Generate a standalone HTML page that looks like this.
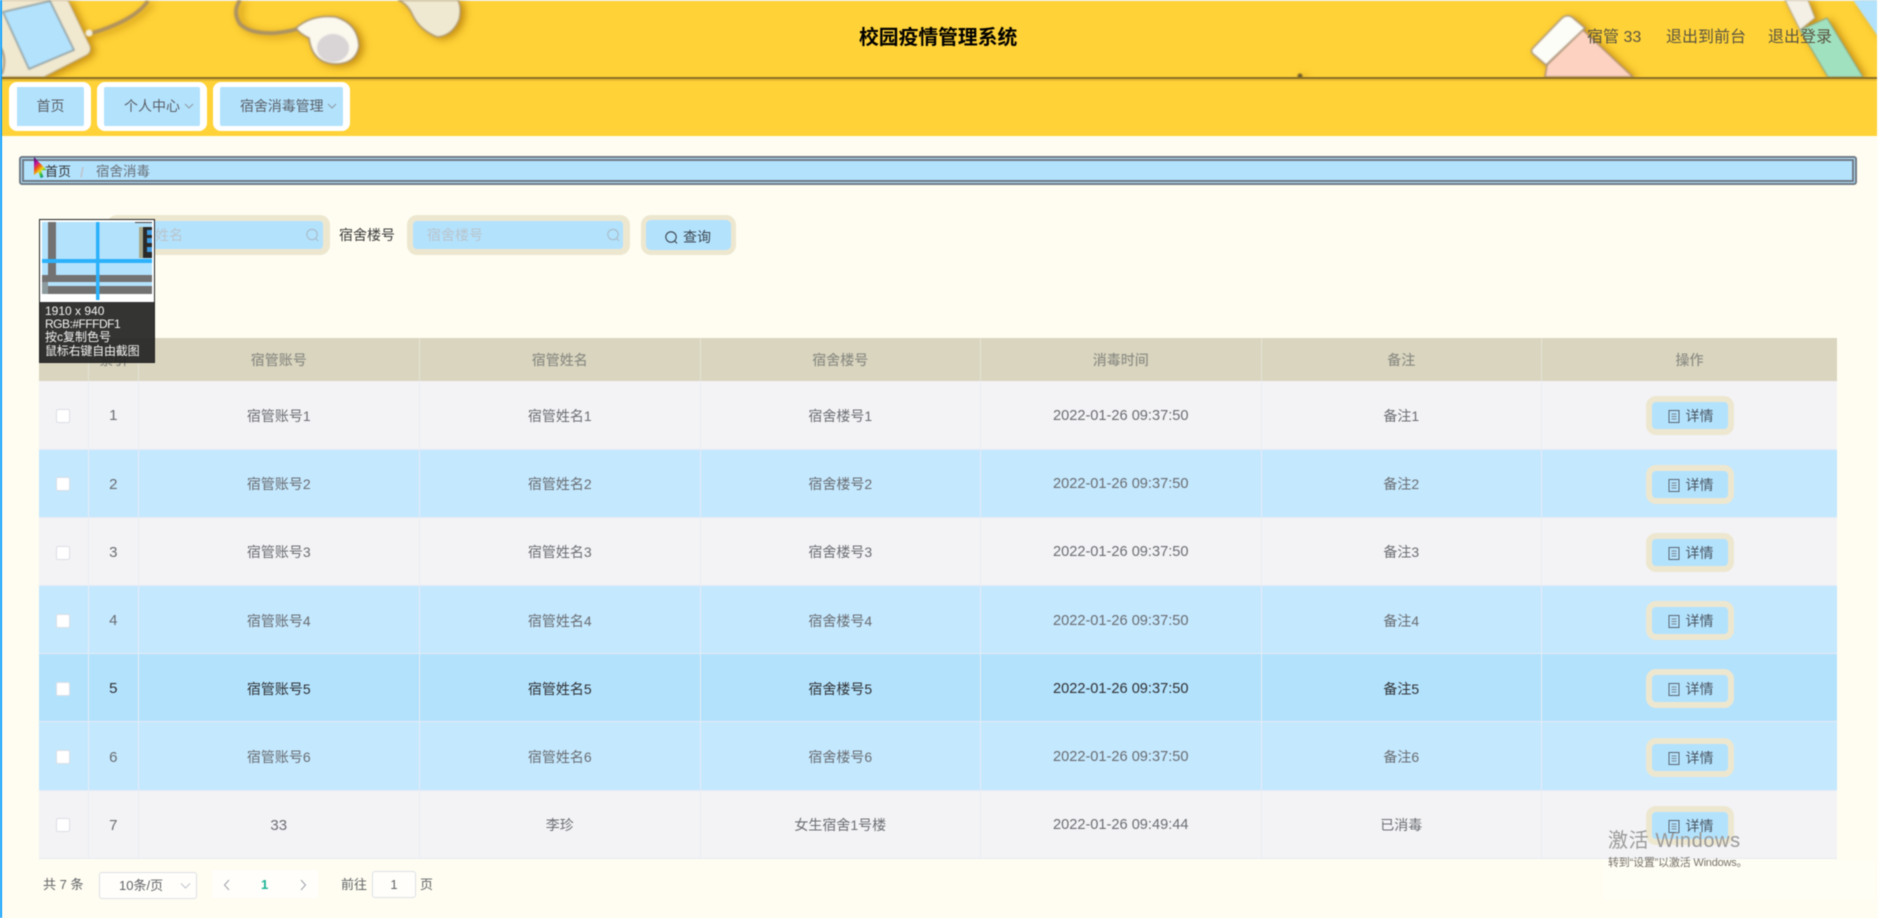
<!DOCTYPE html>
<html lang="zh">
<head>
<meta charset="utf-8">
<title>校园疫情管理系统</title>
<style>
html,body{margin:0;padding:0;width:1879px;height:918px;overflow:hidden;background:#fffdf1}
*{box-sizing:border-box}
#wrap{position:absolute;left:0;top:0;width:1879px;height:918px;overflow:hidden;background:#fffdf1;font-family:"Liberation Sans","Noto Sans CJK SC",sans-serif;filter:blur(.5px)}
.a{position:absolute;white-space:nowrap}
.navb{position:absolute;top:82px;height:49px;background:#b3e2fd;border:solid #fff;border-width:5px 7px;border-radius:8px;font-size:14px;color:#5b6168;line-height:39px}
.inp{position:absolute;top:215px;height:40px;background:#b3e2fd;border:solid #ede7d0;border-width:6px 7px;border-radius:10px}
table{position:absolute;left:39px;top:338px;width:1798px;border-collapse:collapse;table-layout:fixed;font-size:14px;color:#6a6d72;text-align:center}
th{height:43px;background:#d9d5bf;color:#8f8f86;font-weight:500;border-right:1px solid #e4e2d4;padding:0}
th:last-child,td:last-child{border-right:0}
td{height:68.2px;padding:2px 0 0;border-right:1px solid #e9ecf3;border-bottom:1px solid #e6ebf3}
tr.g td{background:#f3f3f5}
tr.b td{background:#c4e8fe}
tr.h td{background:#b3e2fd;color:#303133}
.ck{display:inline-block;width:14px;height:14px;background:#fff;border:1px solid #dcdfe6;border-radius:2px;vertical-align:middle;position:relative;top:-1px;left:-1px}
.n{font-size:15px}
.d{display:inline-block;width:88px;height:39px;background:#b3e2fd;border:6px solid #ede7d0;border-radius:10px;color:#4a5560;line-height:28px;vertical-align:middle;text-align:left;padding-left:16px;font-size:14px}
.d svg{vertical-align:-2px;margin-right:6px}
.dt{font-size:14.6px}
</style>
</head>
<body>
<div id="wrap">

<!-- header art -->
<svg class="a" style="left:0;top:0" width="1879" height="136" viewBox="0 0 1879 136">
<rect width="1879" height="136" fill="#ffd237"/>
<rect y="0" width="1879" height="1" fill="#f0f0f0"/>
<g style="filter:drop-shadow(4px 2px 4px rgba(170,110,0,.7)) blur(.8px)">
 <!-- phone -->
 <path d="M10 0H68L90 46Q92 53 85 56L44 77H0V0Z" fill="#f0e8cf" stroke="#b7a37e" stroke-width="1"/>
 <path d="M3 12L50 1 74 50 29 69Z" fill="#b3e2fd" stroke="#8d9c9e" stroke-width="1.5"/>
 <path d="M1 48Q7 60 2 74" fill="none" stroke="#a8987c" stroke-width="2"/>
 <path d="M92 33Q110 28 125 20T148 1" fill="none" stroke="#b2935c" stroke-width="4"/>
 <circle cx="89" cy="33" r="3.5" fill="#f5efdf"/>
 <!-- earphones -->
 <path d="M240 0Q232 12 240 24 250 34 275 33 295 31 305 26" fill="none" stroke="#ad9361" stroke-width="4"/>
 <path d="M296 28Q312 14 336 17 358 24 359 46 356 64 335 64 312 63 309 38 300 34 296 28Z" fill="#fbf8ee" stroke="#a89270" stroke-width="1.5"/>
 <ellipse cx="333" cy="48" rx="16" ry="14" fill="#d9d4d6"/>
 <path d="M398 0Q408 4 413 16 420 30 437 37 452 36 459 20 462 8 458 0Z" fill="#efe9d2" stroke="#ae976d" stroke-width="1.5"/>
 <circle cx="1300" cy="76" r="2.5" fill="#6e5b2a"/>
 <!-- eraser -->
 <path d="M1547 65L1583 30 1633 77H1545Z" fill="#fdd2c0" stroke="#b08f72" stroke-width="1.5"/>
 <path d="M1533 54Q1530 51 1533 48L1562 18Q1567 14 1572 17L1585 28 1546 65Z" fill="#fdfdf8" stroke="#a99377" stroke-width="1.5"/>
 <!-- pencil -->
 <path d="M1800 30L1827 18 1863 77H1828Z" fill="#a0e2c0" stroke="#8a9f80" stroke-width="1"/>
 <path d="M1785 0H1808L1815 18 1800 30Z" fill="#f4f0e6" stroke="#b0a286" stroke-width="1"/>
 <path d="M1853 0H1879V38Z" fill="#b3e2fd"/>
</g>
<rect y="77" width="1879" height="2" fill="#8c6f24"/>
<rect y="79" width="1879" height="2" fill="#e8bb30"/>
<rect y="81" width="1879" height="55" fill="#ffd237"/>
</svg>
<div class="a" style="left:0;top:0;width:2px;height:918px;background:#0a9fff"></div>
<div class="a" style="left:1877px;top:0;width:2px;height:918px;background:#fffefa"></div>

<div class="a" style="left:859px;top:24px;font-size:19.8px;font-weight:700;color:#000;line-height:28px">校园疫情管理系统</div>
<div class="a" style="left:1587px;top:27px;font-size:16px;color:#5a5540;line-height:22px">宿管 33</div>
<div class="a" style="left:1666px;top:27px;font-size:16px;color:#5a5540;line-height:22px">退出到前台</div>
<div class="a" style="left:1768px;top:27px;font-size:16px;color:#5a5540;line-height:22px">退出登录</div>

<!-- nav -->
<div class="navb" style="left:9px;width:82px;text-align:center;border-left-width:8px">首页</div>
<div class="navb" style="left:97px;width:110px;padding-left:20px">个人中心</div>
<div class="navb" style="left:213px;width:137px;padding-left:20px;letter-spacing:-.1px">宿舍消毒管理</div>
<svg class="a" style="left:184px;top:103px" width="10" height="7"><path d="M1 1L5 5 9 1" fill="none" stroke="#8f9aa2"/></svg>
<svg class="a" style="left:327px;top:103px" width="10" height="7"><path d="M1 1L5 5 9 1" fill="none" stroke="#8f9aa2"/></svg>

<!-- breadcrumb -->
<div class="a" style="left:19px;top:156px;width:1838px;height:29px;background:#b3e2fd;border:5px double #6f7a85;border-radius:3px"></div>
<div class="a" style="left:45px;top:162px;font-size:13px;line-height:20px;color:#303133">首页</div>
<div class="a" style="left:80px;top:162px;font-size:14px;line-height:20px;color:#c0c4cc;font-weight:700">/</div>
<div class="a" style="left:96px;top:162px;font-size:13.5px;line-height:20px;color:#6a7178">宿舍消毒</div>

<!-- search -->
<div class="inp" style="left:107px;width:223px"></div>
<div class="a" style="left:127px;top:225px;font-size:14px;line-height:20px;color:#b9c4cc">宿管姓名</div>
<svg class="a" style="left:305px;top:228px" width="15" height="15"><circle cx="7" cy="6.5" r="5.2" fill="none" stroke="#a9bcc8" stroke-width="1.1"/><path d="M10.8 10.5L13 13" stroke="#a9bcc8" stroke-width="1.1"/></svg>
<div class="a" style="left:339px;top:225px;font-size:14px;line-height:20px;color:#3b3b3b">宿舍楼号</div>
<div class="inp" style="left:407px;width:223px;border-left-width:6px"></div>
<div class="a" style="left:427px;top:225px;font-size:14px;line-height:20px;color:#b9c4cc">宿舍楼号</div>
<svg class="a" style="left:606px;top:228px" width="15" height="15"><circle cx="7" cy="6.5" r="5.2" fill="none" stroke="#a9bcc8" stroke-width="1.1"/><path d="M10.8 10.5L13 13" stroke="#a9bcc8" stroke-width="1.1"/></svg>
<div class="inp" style="left:641px;width:95px;border-width:5px"></div>
<svg class="a" style="left:664px;top:230px" width="15" height="15"><circle cx="7" cy="7" r="5.2" fill="none" stroke="#3d4650" stroke-width="1.1"/><path d="M10.8 11L13 13.4" stroke="#3d4650" stroke-width="1.1"/></svg>
<div class="a" style="left:683px;top:227px;font-size:14px;line-height:20px;color:#3d4650">查询</div>

<!-- table -->
<table>
<colgroup><col style="width:49.5px"><col style="width:49.5px"><col style="width:281.5px"><col style="width:280.5px"><col style="width:280.5px"><col style="width:280.5px"><col style="width:280.5px"><col></colgroup>
<thead><tr><th></th><th>索引</th><th>宿管账号</th><th>宿管姓名</th><th>宿舍楼号</th><th>消毒时间</th><th>备注</th><th>操作</th></tr></thead>
<tbody>
<tr class="g"><td><span class="ck"></span></td><td class="n">1</td><td>宿管账号1</td><td>宿管姓名1</td><td>宿舍楼号1</td><td class="dt">2022-01-26 09:37:50</td><td>备注1</td><td><span class="d"><svg width="12" height="13"><rect x="1" y=".5" width="10" height="12" fill="none" stroke="#5a6570"/><path d="M3.5 4H8.5M3.5 6.5H8.5M3.5 9H8.5" stroke="#7a8590"/></svg>详情</span></td></tr>
<tr class="b"><td><span class="ck"></span></td><td class="n">2</td><td>宿管账号2</td><td>宿管姓名2</td><td>宿舍楼号2</td><td class="dt">2022-01-26 09:37:50</td><td>备注2</td><td><span class="d"><svg width="12" height="13"><rect x="1" y=".5" width="10" height="12" fill="none" stroke="#5a6570"/><path d="M3.5 4H8.5M3.5 6.5H8.5M3.5 9H8.5" stroke="#7a8590"/></svg>详情</span></td></tr>
<tr class="g"><td><span class="ck"></span></td><td class="n">3</td><td>宿管账号3</td><td>宿管姓名3</td><td>宿舍楼号3</td><td class="dt">2022-01-26 09:37:50</td><td>备注3</td><td><span class="d"><svg width="12" height="13"><rect x="1" y=".5" width="10" height="12" fill="none" stroke="#5a6570"/><path d="M3.5 4H8.5M3.5 6.5H8.5M3.5 9H8.5" stroke="#7a8590"/></svg>详情</span></td></tr>
<tr class="b"><td><span class="ck"></span></td><td class="n">4</td><td>宿管账号4</td><td>宿管姓名4</td><td>宿舍楼号4</td><td class="dt">2022-01-26 09:37:50</td><td>备注4</td><td><span class="d"><svg width="12" height="13"><rect x="1" y=".5" width="10" height="12" fill="none" stroke="#5a6570"/><path d="M3.5 4H8.5M3.5 6.5H8.5M3.5 9H8.5" stroke="#7a8590"/></svg>详情</span></td></tr>
<tr class="h"><td><span class="ck"></span></td><td class="n">5</td><td>宿管账号5</td><td>宿管姓名5</td><td>宿舍楼号5</td><td class="dt">2022-01-26 09:37:50</td><td>备注5</td><td><span class="d"><svg width="12" height="13"><rect x="1" y=".5" width="10" height="12" fill="none" stroke="#5a6570"/><path d="M3.5 4H8.5M3.5 6.5H8.5M3.5 9H8.5" stroke="#7a8590"/></svg>详情</span></td></tr>
<tr class="b"><td><span class="ck"></span></td><td class="n">6</td><td>宿管账号6</td><td>宿管姓名6</td><td>宿舍楼号6</td><td class="dt">2022-01-26 09:37:50</td><td>备注6</td><td><span class="d"><svg width="12" height="13"><rect x="1" y=".5" width="10" height="12" fill="none" stroke="#5a6570"/><path d="M3.5 4H8.5M3.5 6.5H8.5M3.5 9H8.5" stroke="#7a8590"/></svg>详情</span></td></tr>
<tr class="g"><td><span class="ck"></span></td><td class="n">7</td><td class="n">33</td><td>李珍</td><td>女生宿舍1号楼</td><td class="dt">2022-01-26 09:49:44</td><td>已消毒</td><td><span class="d"><svg width="12" height="13"><rect x="1" y=".5" width="10" height="12" fill="none" stroke="#5a6570"/><path d="M3.5 4H8.5M3.5 6.5H8.5M3.5 9H8.5" stroke="#7a8590"/></svg>详情</span></td></tr>
</tbody>
</table>

<!-- pagination -->
<div class="a" style="left:43px;top:875px;font-size:13px;line-height:20px;color:#606266">共 7 条</div>
<div class="a" style="left:99px;top:872px;width:98px;height:27px;background:#fffefa;border:1px solid #dcdfe6;border-radius:3px;font-size:13px;line-height:25px;color:#606266;padding-left:19px">10条/页</div>
<svg class="a" style="left:180px;top:882px" width="11" height="8"><path d="M1 1.5L5.5 6 10 1.5" fill="none" stroke="#c0c4cc"/></svg>
<div class="a" style="left:212px;top:870px;width:106px;height:28px;background:#fffefa"></div>
<svg class="a" style="left:223px;top:879px" width="8" height="12"><path d="M6 1L1.5 6 6 11" fill="none" stroke="#a8abb2" stroke-width="1.2"/></svg>
<div class="a" style="left:261px;top:875px;font-size:13px;line-height:20px;font-weight:700;color:#19b394">1</div>
<svg class="a" style="left:299px;top:879px" width="8" height="12"><path d="M2 1L6.5 6 2 11" fill="none" stroke="#a8abb2" stroke-width="1.2"/></svg>
<div class="a" style="left:341px;top:875px;font-size:13px;line-height:20px;color:#606266">前往</div>
<div class="a" style="left:372px;top:871px;width:44px;height:27px;background:#fffefa;border:1px solid #dcdfe6;border-radius:3px;font-size:13px;line-height:25px;color:#606266;text-align:center">1</div>
<div class="a" style="left:420px;top:875px;font-size:13px;line-height:20px;color:#606266">页</div>

<!-- color picker popup -->
<div class="a" style="left:39px;top:219px;width:116px;height:144px;border:1px solid #222;overflow:hidden;background:rgba(35,35,35,.92)">
 <svg class="a" style="left:-1px;top:-1px" width="115" height="83" viewBox="39 219 115 83">
  <rect x="39" y="219" width="115" height="83" fill="#fff"/>
  <rect x="42" y="222" width="110" height="72" fill="#b3e2fd"/>
  <rect x="48" y="222" width="8" height="53" fill="#727272"/>
  <rect x="42" y="275" width="110" height="7" fill="#727272"/>
  <rect x="42" y="286" width="110" height="8" fill="#727272"/>
  <rect x="42" y="282" width="6" height="12" fill="#8d9a9e"/>
  <rect x="139" y="227" width="4" height="31" fill="#a9a98c"/>
  <rect x="143" y="227" width="9" height="31" fill="#2a2a2a"/>
  <rect x="147" y="230" width="5" height="5" fill="#3f9ae0"/>
  <rect x="147" y="238" width="5" height="5" fill="#3f9ae0"/>
  <rect x="147" y="247" width="5" height="5" fill="#3f9ae0"/>
  <rect x="135" y="222" width="17" height="1" fill="#444"/>
  <rect x="96" y="222" width="3.5" height="78" fill="#2cb1fb"/>
  <rect x="42" y="259" width="110" height="4" fill="#2cb1fb"/>
 </svg>
 <div class="a" style="left:5px;top:85px;font-size:12px;line-height:13.2px;color:#f4f4f4">1910 x 940<br><span style="letter-spacing:-.5px">RGB:#FFFDF1</span><br>按c复制色号<br><span style="letter-spacing:-.2px">鼠标右键自由截图</span></div>
</div>

<!-- cursor -->
<svg class="a" style="left:30px;top:154px" width="20" height="27" viewBox="30 154 20 27">
<defs><linearGradient id="rb" x1="0" y1="0" x2=".6" y2="1"><stop offset="0" stop-color="#2a0a5a"/><stop offset=".3" stop-color="#c016a0"/><stop offset=".5" stop-color="#f25a12"/><stop offset=".7" stop-color="#e8dc1a"/><stop offset=".85" stop-color="#3cc83c"/><stop offset="1" stop-color="#0d8f90"/></linearGradient></defs>
<path d="M34 157L46.5 170 41 170.5 43.5 177 40.5 178 38.5 172 34 175Z" fill="url(#rb)"/>
</svg>

<!-- watermark -->
<div class="a" style="left:1603px;top:860px;width:272px;height:40px;background:#fffef4"></div>
<div class="a" style="left:1608px;top:826px;font-size:20px;line-height:30px;color:#9a9a9a;letter-spacing:.6px">激活 Windows</div>
<div class="a" style="left:1608px;top:856px;font-size:11px;line-height:14px;color:#77726a;letter-spacing:-.2px">转到“设置”以激活 Windows。</div>

</div>
</body>
</html>
